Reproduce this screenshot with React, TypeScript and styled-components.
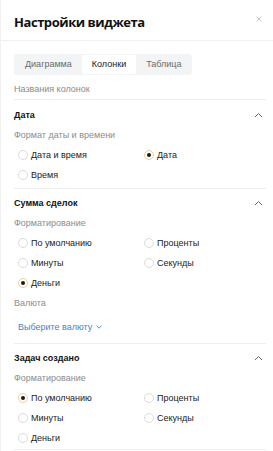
import React from "react";
import styled, { createGlobalStyle } from "styled-components";

const Global = createGlobalStyle`
  html, body { margin: 0; padding: 0; background: #fff; }
  body { font-family: "Liberation Sans", Arial, sans-serif; color: #1f1f1f; }
  * { box-sizing: border-box; }
`;

const Panel = styled.div`
  width: 273px;
  height: 451px;
  overflow: hidden;
  background: #fff;
  border-left: 1px solid #f1f1f1;
`;

const Header = styled.div`
  height: 41px;
  display: flex;
  align-items: center;
  justify-content: space-between;
  padding: 0 7px 0 13px;
  border-bottom: 1px solid #f0f0f0;
`;

const Title = styled.h1`
  margin: 3px 0 0 0;
  font-family: "Open Sans", sans-serif;
  font-size: 13px;
  font-weight: 700;
  letter-spacing: -0.45px;
  color: #111;
`;

const Close = styled.button`
  border: 0;
  background: none;
  padding: 0;
  width: 8px;
  height: 8px;
  display: flex;
  align-items: center;
  justify-content: center;
  margin-right: 3px;
  margin-top: -2px;
`;

const Body = styled.div`
  padding: 12px 7px 0 13px;
`;

const Tabs = styled.div`
  display: inline-flex;
  background: #f3f4f5;
  border-radius: 3px;
  padding: 1px;
  height: 21px;
`;

const Tab = styled.div<{ $active?: boolean }>`
  display: flex;
  align-items: center;
  justify-content: center;
  padding: 0 10px;
  font-size: 9px;
  border-radius: 2px;
  color: ${(p) => (p.$active ? "#1a1a1a" : "#6b6b6b")};
  background: ${(p) => (p.$active ? "#fff" : "transparent")};
`;

const ColumnsLabel = styled.div`
  font-size: 9px;
  color: #8a8a8a;
  line-height: 20px;
  padding-top: 4px;
  border-bottom: 1.5px solid #eeeeee;
`;

const Section = styled.div<{ $pt?: number; $pb?: number }>`
  padding: ${(p) => p.$pt ?? 4}px 0 ${(p) => p.$pb ?? 3}px 0;
  border-bottom: 1.5px solid #eeeeee;
`;

const SectionHead = styled.div`
  display: flex;
  align-items: center;
  justify-content: space-between;
  height: 20px;
`;

const SectionTitle = styled.div`
  font-size: 9px;
  font-weight: 700;
  color: #111;
`;

const Chevron = styled.span`
  display: flex;
  width: 12px;
  justify-content: center;
  margin-right: 2px;
`;

const Label = styled.div`
  font-size: 9px;
  color: #8c8c8c;
  line-height: 20px;
`;

const Grid = styled.div`
  display: grid;
  grid-template-columns: 126px 1fr;
  padding-left: 4px;
`;

const Option = styled.label`
  display: flex;
  align-items: center;
  height: 20px;
  font-size: 9px;
  color: #222;
  gap: 3px;
`;

const Circle = styled.span<{ $checked?: boolean }>`
  width: 10px;
  height: 10px;
  border-radius: 50%;
  border: 1px solid ${(p) => (p.$checked ? "#f2cf97" : "#dcdcdc")};
  display: flex;
  align-items: center;
  justify-content: center;
  flex: none;
  &::after {
    content: "";
    width: 4px;
    height: 4px;
    border-radius: 50%;
    background: ${(p) => (p.$checked ? "#1a1a1a" : "transparent")};
  }
`;

const Select = styled.div`
  display: flex;
  align-items: center;
  gap: 4px;
  height: 20px;
  margin-top: 4px;
  padding-left: 4px;
  font-size: 9px;
  color: #4b84bd;
`;

const ChevronUp = () => (
  <svg width="9" height="6" viewBox="0 0 9 6">
    <path d="M1 5 L4.5 1.5 L8 5" fill="none" stroke="#666" strokeWidth="1" />
  </svg>
);

const Radio = ({ label, checked }: { label: string; checked?: boolean }) => (
  <Option>
    <Circle $checked={checked} />
    {label}
  </Option>
);

export default function App() {
  return (
    <>
      <Global />
      <Panel>
        <Header>
          <Title>Настройки виджета</Title>
          <Close>
            <svg width="6" height="6" viewBox="0 0 6 6">
              <path d="M0.5 0.5 L5.5 5.5 M5.5 0.5 L0.5 5.5" stroke="#c2c2c2" strokeWidth="0.9" />
            </svg>
          </Close>
        </Header>
        <Body>
          <Tabs>
            <Tab>Диаграмма</Tab>
            <Tab $active>Колонки</Tab>
            <Tab>Таблица</Tab>
          </Tabs>
          <ColumnsLabel>Названия колонок</ColumnsLabel>

          <Section $pt={5} $pb={3}>
            <SectionHead>
              <SectionTitle>Дата</SectionTitle>
              <Chevron><ChevronUp /></Chevron>
            </SectionHead>
            <Label>Формат даты и времени</Label>
            <Grid>
              <Radio label="Дата и время" />
              <Radio label="Дата" checked />
              <Radio label="Время" />
            </Grid>
          </Section>

          <Section $pb={6}>
            <SectionHead>
              <SectionTitle>Сумма сделок</SectionTitle>
              <Chevron><ChevronUp /></Chevron>
            </SectionHead>
            <Label>Форматирование</Label>
            <Grid>
              <Radio label="По умолчанию" />
              <Radio label="Проценты" />
              <Radio label="Минуты" />
              <Radio label="Секунды" />
              <Radio label="Деньги" checked />
            </Grid>
            <Label>Валюта</Label>
            <Select>
              Выберите валюту
              <svg width="6" height="4" viewBox="0 0 6 4">
                <path d="M0.5 0.8 L3 3.2 L5.5 0.8" fill="none" stroke="#4b84bd" strokeWidth="0.9" />
              </svg>
            </Select>
          </Section>

          <Section $pb={1}>
            <SectionHead>
              <SectionTitle>Задач создано</SectionTitle>
              <Chevron><ChevronUp /></Chevron>
            </SectionHead>
            <Label>Форматирование</Label>
            <Grid>
              <Radio label="По умолчанию" checked />
              <Radio label="Проценты" />
              <Radio label="Минуты" />
              <Radio label="Секунды" />
              <Radio label="Деньги" />
            </Grid>
          </Section>
        </Body>
      </Panel>
    </>
  );
}
